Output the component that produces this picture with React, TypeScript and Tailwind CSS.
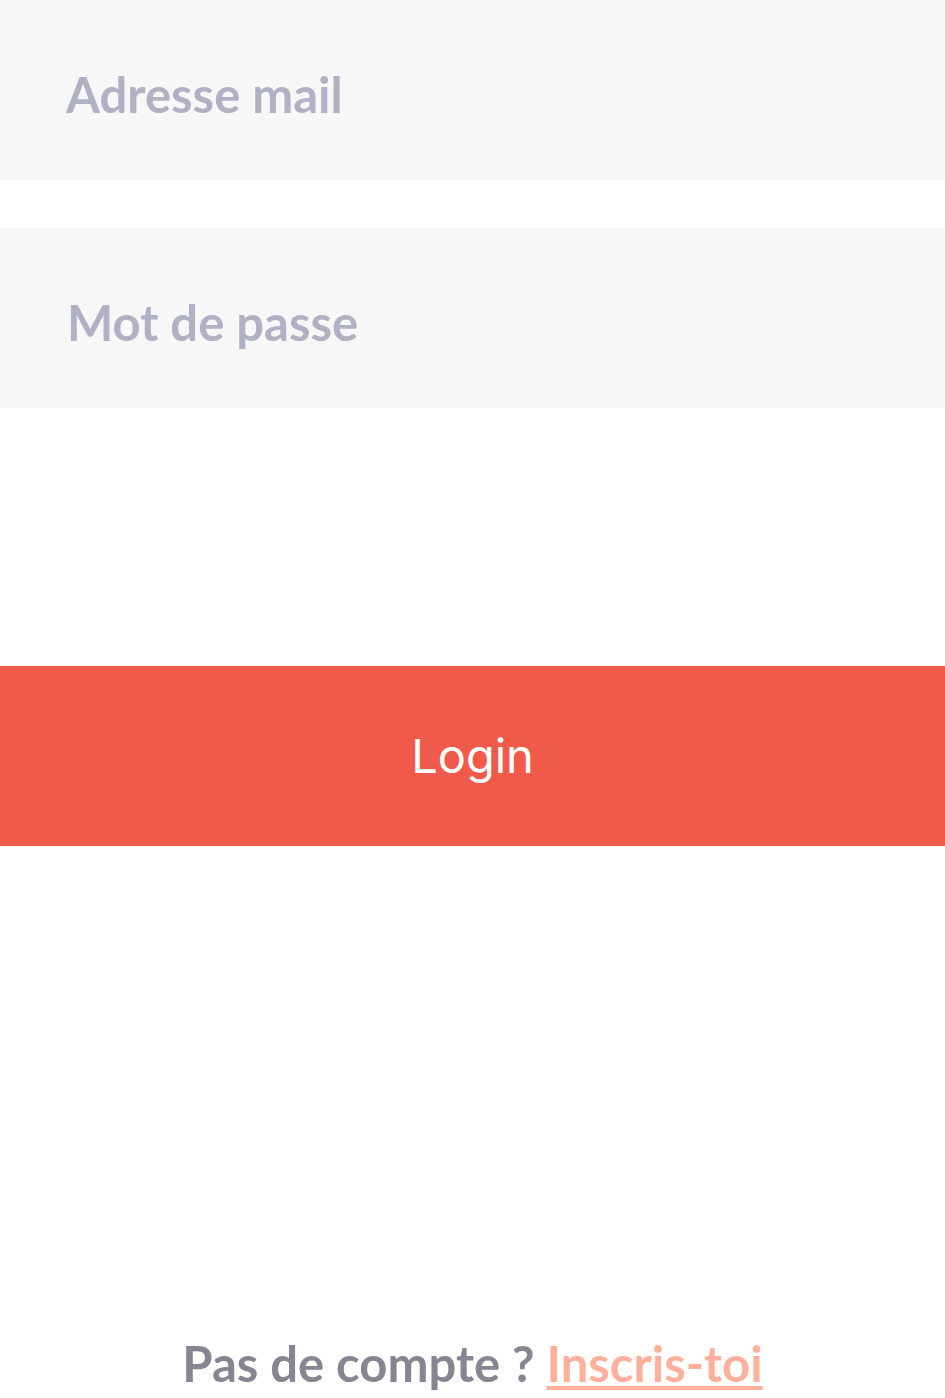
import { JSX } from "react";

const App = (): JSX.Element => {
  return (
    <div className="h-[1398px] bg-white flex flex-col overflow-hidden font-['Lato',sans-serif]">
      <input
        type="email"
        placeholder="Adresse mail"
        className="h-[180px] w-full bg-[#f7f7f7] pl-[66px] pt-[8px] text-[49px] font-bold outline-none placeholder:text-[#b1b1c4]"
      />
      <input
        type="password"
        placeholder="Mot de passe"
        className="mt-[48px] h-[180px] w-full bg-[#f7f7f7] pl-[67px] pt-[8px] text-[49px] font-bold outline-none placeholder:text-[#b1b1c4]"
      />

      <button className="mt-[258px] h-[180px] w-full bg-[#f05a4b] text-white text-[47px] font-normal font-['Inter',sans-serif]">
        Login
      </button>

      <p className="mt-auto text-center text-[49px] font-bold text-[#868592] leading-none pb-[10px]">
        Pas de compte ?{" "}
        <a href="#" className="text-[#ffb09c] underline underline-offset-[4px] decoration-[4px]">
          Inscris-toi
        </a>
      </p>
    </div>
  );
};

export default App;
